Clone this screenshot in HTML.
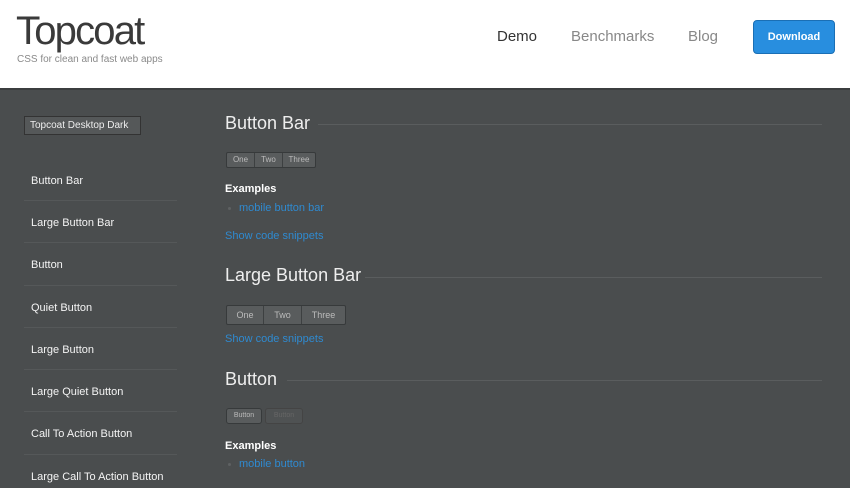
<!DOCTYPE html>
<html><head><style>
*{margin:0;padding:0;box-sizing:border-box}
body{width:850px;height:488px;overflow:hidden;font-family:"Liberation Sans",sans-serif;background:#4a4d4e;position:relative}
.hdr{position:absolute;left:0;top:0;width:850px;height:90px;background:#fff;border-bottom:2px solid #3b3e3f}
.a{position:absolute;white-space:nowrap}
.logo{left:16px;top:9px;font-size:40px;color:#3a3a3a;letter-spacing:-1.8px}
.tag{left:17px;top:54px;font-size:10px;color:#8a8a8a}
.nav{top:28px;font-size:15px;color:#888}
.dl{left:753px;top:20px;width:82px;height:34px;background:#288edf;border:1px solid #1a6fb5;border-radius:4px;color:#fff;font-size:11px;font-weight:bold;text-align:center;line-height:32px}
.sel{left:24px;top:116px;width:117px;height:19px;background:#555859;border:1px solid #333;font-size:10px;color:#eee;padding-left:5px;line-height:17px}
.side{left:31px;font-size:11px;color:#f4f4f4}
.sep{position:absolute;left:24px;width:153px;height:1px;background:#555859}
.h{font-size:18px;color:#eee;left:225px}
.line{position:absolute;height:1px;background:#5a5d5e;right:28px}
.bb{position:absolute;display:flex;border:1px solid #373a3b;border-radius:2px;background:#595c5d}
.bb span{color:#bbb;border-right:1px solid #3d4041;text-align:center}
.bb span:last-child{border-right:none}
.ex{left:225px;font-size:11px;color:#fff;font-weight:bold}
.lk{font-size:11px;color:#2f8ad0}
.dot{position:absolute;width:3px;height:3px;background:#5e6162;border-radius:50%}
</style></head><body>
<div class="hdr"></div>
<div class="a logo">Topcoat</div>
<div class="a tag">CSS for clean and fast web apps</div>
<div class="a nav" style="left:497px;color:#333">Demo</div>
<div class="a nav" style="left:571px">Benchmarks</div>
<div class="a nav" style="left:688px">Blog</div>
<div class="a dl">Download</div>

<div class="a sel">Topcoat Desktop Dark</div>
<div class="a side" style="top:175px">Button Bar</div><div class="sep" style="top:200px"></div>
<div class="a side" style="top:217px">Large Button Bar</div><div class="sep" style="top:242px"></div>
<div class="a side" style="top:259px">Button</div><div class="sep" style="top:285px"></div>
<div class="a side" style="top:302px">Quiet Button</div><div class="sep" style="top:327px"></div>
<div class="a side" style="top:344px">Large Button</div><div class="sep" style="top:369px"></div>
<div class="a side" style="top:386px">Large Quiet Button</div><div class="sep" style="top:411px"></div>
<div class="a side" style="top:428px">Call To Action Button</div><div class="sep" style="top:454px"></div>
<div class="a side" style="top:471px">Large Call To Action Button</div>

<div class="a h" style="top:113px">Button Bar</div><div class="line" style="left:318px;top:124px"></div>
<div class="bb" style="left:226px;top:152px;height:16px;font-size:8px;line-height:14px"><span style="width:28px">One</span><span style="width:28px">Two</span><span style="width:32px">Three</span></div>
<div class="a ex" style="top:183px">Examples</div>
<div class="dot" style="left:228px;top:207px"></div>
<div class="a lk" style="left:239px;top:202px">mobile button bar</div>
<div class="a lk" style="left:225px;top:230px">Show code snippets</div>

<div class="a h" style="top:265px">Large Button Bar</div><div class="line" style="left:365px;top:277px"></div>
<div class="bb" style="left:226px;top:305px;height:20px;font-size:9px;line-height:18px"><span style="width:37px">One</span><span style="width:38px">Two</span><span style="width:43px">Three</span></div>
<div class="a lk" style="left:225px;top:333px">Show code snippets</div>

<div class="a h" style="top:369px">Button</div><div class="line" style="left:287px;top:380px"></div>
<div class="bb" style="left:226px;top:408px;height:16px;font-size:7px;line-height:14px;border-radius:3px"><span style="width:34px">Button</span></div>
<div class="bb" style="left:265px;top:408px;height:16px;font-size:7px;line-height:14px;background:#4f5253;border-color:#444;border-radius:3px"><span style="width:36px;color:#666">Button</span></div>
<div class="a ex" style="top:440px">Examples</div>
<div class="dot" style="left:228px;top:463px"></div>
<div class="a lk" style="left:239px;top:458px">mobile button</div>
</body></html>
